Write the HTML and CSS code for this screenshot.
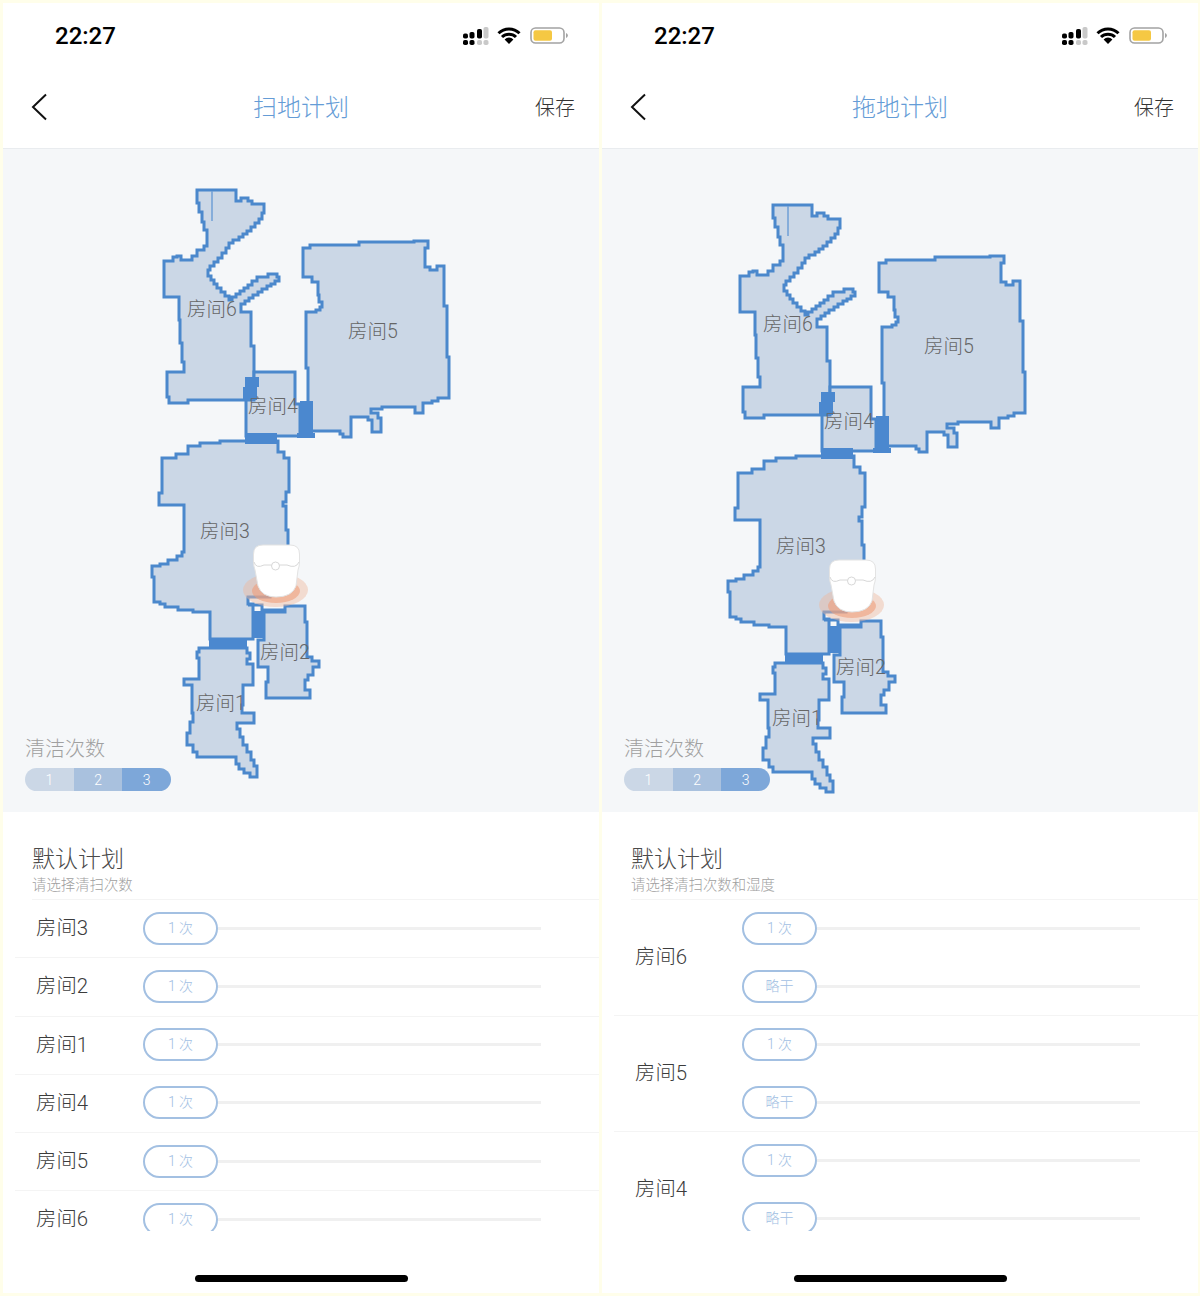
FILE: index.html
```html
<!DOCTYPE html>
<html lang="zh-CN">
<head>
  <meta charset="UTF-8">
  <meta name="viewport" content="width=device-width, initial-scale=1.0">
  <title>清扫计划</title>
  <link rel="stylesheet" href="styles.css">
</head>
<body>
  <!-- shared drawings: status icons, floor plan, robot -->
  <svg class="defs" width="0" height="0" aria-hidden="true">
    <defs>
      <symbol id="signal" viewBox="0 0 26 18">
        <rect x="0" y="6.600" width="5" height="5" rx="1.800" fill="#000"/>
        <rect x="0" y="13" width="5" height="5" rx="1.800" fill="#000"/>
        <rect x="6.500" y="5" width="5" height="6.600" rx="1.800" fill="#000"/>
        <rect x="6.500" y="13" width="5" height="5" rx="1.800" fill="#000"/>
        <rect x="14" y="2" width="5" height="9.600" rx="1.800" fill="#000"/>
        <rect x="14" y="13" width="5" height="5" rx="1.800" fill="#c9c9c9"/>
        <rect x="20.500" y="0" width="5" height="11.600" rx="1.800" fill="#c9c9c9"/>
        <rect x="20.500" y="13" width="5" height="5" rx="1.800" fill="#c9c9c9"/>
      </symbol>
      <symbol id="wifi" viewBox="0 0 24 17">
        <path d="M1.500 6.200a15 15 0 0 1 21 0M5 10a10 10 0 0 1 14 0" fill="none" stroke="#000" stroke-width="3"/>
        <path d="M12 17l-4.400-4.600a6.200 6.200 0 0 1 8.800 0z" fill="#000"/>
      </symbol>
      <symbol id="battery" viewBox="0 0 38 17">
        <rect x="1" y="1" width="33" height="15" rx="4.500" fill="none" stroke="#a3a3a3" stroke-width="1.600"/>
        <rect x="3.500" y="3.200" width="18.500" height="10.600" rx="2" fill="#f5c843"/>
        <path d="M36 6v5a2.600 2.600 0 0 0 0-5z" fill="#a3a3a3"/>
      </symbol>
      <g id="plan">
        <path class="room" d="M197 190H236V201H241V198H248V201H252V204H264V213H262V219H259V223H255V227H251V231H247V234H243V237H239V240H233V243H229V248H226V253H222V258H218V262H214V266H210V270H208V276H211V280H214V284H217V288H221V292H225V296H229V300H232V297H236V294H240V291H244V288H248V285H252V281H257V277H268V274H277V277H279V281H275V284H271V286H267V289H262V292H258V295H253V298H249V301H245V304H241V312H251V346H254V400H188V403H169V397H167V372H184V362H182V343H180V320H179V297H164V261H173V257H177V256H181V260H192V256H197V250H204V246H207V230H204V222H202V212H199V203H197Z"/>
        <path class="edge" d="M212 191V221"/>
        <path class="room" d="M303 248H310V245H359V242H414V241H428V248H425V267H430V270H437V266H444V306H447V357H449V398H438V401H432V403H423V413H415V407H382V409H371V413H378V418H381V432H372V420H368V417H351V437H343V434H340V431H308V368H306V312H316V310H320V307H322V302H319V295H318V282H312V277H303Z"/>
        <path class="room" d="M254 372H295V404H300V436H246V400H254Z"/>
        <path class="room" d="M278 441V452H284V458H289V492H286V502H283V506H286V530H288V548H270V597H248V604H253V639H210V612H193V610H178V607H165V604H160V602H154V577H152V566H160V564H168V560H177V556H182V552H184V525H184V505H159V493H162V458H176V454H188V446H200V443H220V441Z"/>
        <path class="room" d="M264 612H285V606H305V622H307V657H312V661H319V667H313V675H308V680H305V690H310V698H266V682H268V667H258V640H264Z"/>
        <path class="edge thick" d="M248 605H262V610H285"/>
        <path class="room" d="M199 648H247V653H250V659H247V664H253V685H243V705H242V713H254V723H237V729H240V737H243V745H247V752H251V760H254V766H257V777H250V773H244V769H239V764H236V757H197V752H193V745H187V733H190V722H193V713H192V685H184V679H199V658H197V652H199Z"/>
        <path class="door" d="M245 377H259V387H257V400H243V387H245Z"/>
        <path class="door" d="M300 401H313V433H315V438H297V433H300Z"/>
        <rect class="door" x="245" y="433" width="32" height="11"/>
        <rect class="door" x="209" y="638" width="38" height="11"/>
        <rect class="door" x="253" y="611" width="11" height="27"/>
      </g>
      <g id="robot">
        <ellipse cx="275.500" cy="590" rx="32.500" ry="17" fill="#f0b79e" fill-opacity=".45"/>
        <ellipse cx="276" cy="591" rx="24" ry="12" fill="#ee9f7c" fill-opacity=".6"/>
        <path d="M253.500 562V554Q253.500 545 263 545H290Q299.500 545 299.500 554V562Q299.500 566 298 570L296 586Q292 597 276 597Q262 597 258 586L255 570Q253.500 566 253.500 562Z" fill="#fff" stroke="#e3e3e3" stroke-width="1"/>
        <path d="M254 562Q256 569 264 565H287Q296 569 299 562" fill="none" stroke="#d8d8d8" stroke-width="1"/>
        <circle cx="275.500" cy="566" r="4" fill="#fff" stroke="#d8d8d8"/>
      </g>
    </defs>
  </svg>

  <section class="phone">
    <div class="screen">
      <div class="status">
        <span class="time">22:27</span>
        <div class="status-icons">
          <svg class="ic-signal"><use href="#signal"/></svg>
          <svg class="ic-wifi"><use href="#wifi"/></svg>
          <svg class="ic-battery"><use href="#battery"/></svg>
        </div>
      </div>
      <div class="nav">
        <svg class="back" viewBox="0 0 16 28"><path d="M15 1.500L2 14l13 12.500"/></svg>
        <div class="nav-title">扫地计划</div>
        <div class="nav-save">保存</div>
      </div>
      <div class="map">
        <svg class="map-canvas" viewBox="3 149 596 663">
          <use href="#plan"/>
          <text class="label" x="212" y="316">房间6</text>
          <text class="label" x="373" y="338">房间5</text>
          <text class="label" x="273" y="413">房间4</text>
          <text class="label" x="225" y="538">房间3</text>
          <text class="label" x="285" y="659">房间2</text>
          <text class="label" x="221" y="710">房间1</text>
          <use href="#robot"/>
        </svg>
        <div class="legend">
          <div class="legend-title">清洁次数</div>
          <div class="legend-pill">
            <span class="seg seg-1">1</span><span class="seg seg-2">2</span><span class="seg seg-3">3</span>
          </div>
        </div>
      </div>
      <div class="sheet">
        <div class="sheet-head">
          <div class="sheet-title">默认计划</div>
          <div class="sheet-sub">请选择清扫次数</div>
        </div>
        <div class="plan-list">
          <div class="plan-row first">
            <div class="room-name">房间3</div>
            <div class="sliders"><div class="slider"><span class="chip">1 次</span><i class="track"></i></div></div>
          </div>
          <div class="plan-row">
            <div class="room-name">房间2</div>
            <div class="sliders"><div class="slider"><span class="chip">1 次</span><i class="track"></i></div></div>
          </div>
          <div class="plan-row">
            <div class="room-name">房间1</div>
            <div class="sliders"><div class="slider"><span class="chip">1 次</span><i class="track"></i></div></div>
          </div>
          <div class="plan-row">
            <div class="room-name">房间4</div>
            <div class="sliders"><div class="slider"><span class="chip">1 次</span><i class="track"></i></div></div>
          </div>
          <div class="plan-row">
            <div class="room-name">房间5</div>
            <div class="sliders"><div class="slider"><span class="chip">1 次</span><i class="track"></i></div></div>
          </div>
          <div class="plan-row">
            <div class="room-name">房间6</div>
            <div class="sliders"><div class="slider"><span class="chip">1 次</span><i class="track"></i></div></div>
          </div>
        </div>
        <div class="home-bar"></div>
      </div>
    </div>
  </section>

  <section class="phone">
    <div class="screen">
      <div class="status">
        <span class="time">22:27</span>
        <div class="status-icons">
          <svg class="ic-signal"><use href="#signal"/></svg>
          <svg class="ic-wifi"><use href="#wifi"/></svg>
          <svg class="ic-battery"><use href="#battery"/></svg>
        </div>
      </div>
      <div class="nav">
        <svg class="back" viewBox="0 0 16 28"><path d="M15 1.500L2 14l13 12.500"/></svg>
        <div class="nav-title">拖地计划</div>
        <div class="nav-save">保存</div>
      </div>
      <div class="map">
        <svg class="map-canvas" viewBox="3 149 596 663">
          <g transform="translate(-23 15)">
            <use href="#plan"/>
            <text class="label" x="212" y="316">房间6</text>
            <text class="label" x="373" y="338">房间5</text>
            <text class="label" x="273" y="413">房间4</text>
            <text class="label" x="225" y="538">房间3</text>
            <text class="label" x="285" y="659">房间2</text>
            <text class="label" x="221" y="710">房间1</text>
            <use href="#robot"/>
          </g>
        </svg>
        <div class="legend">
          <div class="legend-title">清洁次数</div>
          <div class="legend-pill">
            <span class="seg seg-1">1</span><span class="seg seg-2">2</span><span class="seg seg-3">3</span>
          </div>
        </div>
      </div>
      <div class="sheet">
        <div class="sheet-head">
          <div class="sheet-title">默认计划</div>
          <div class="sheet-sub">请选择清扫次数和湿度</div>
        </div>
        <div class="plan-list">
          <div class="plan-row first double">
            <div class="room-name">房间6</div>
            <div class="sliders">
              <div class="slider"><span class="chip">1 次</span><i class="track"></i></div>
              <div class="slider"><span class="chip">略干</span><i class="track"></i></div>
            </div>
          </div>
          <div class="plan-row double">
            <div class="room-name">房间5</div>
            <div class="sliders">
              <div class="slider"><span class="chip">1 次</span><i class="track"></i></div>
              <div class="slider"><span class="chip">略干</span><i class="track"></i></div>
            </div>
          </div>
          <div class="plan-row double">
            <div class="room-name">房间4</div>
            <div class="sliders">
              <div class="slider"><span class="chip">1 次</span><i class="track"></i></div>
              <div class="slider"><span class="chip">略干</span><i class="track"></i></div>
            </div>
          </div>
        </div>
        <div class="home-bar"></div>
      </div>
    </div>
  </section>
</body>
</html>
```

FILE: styles.css
```css
* { box-sizing: border-box; }

body {
  margin: 0;
  width: 1200px;
  height: 1296px;
  display: flex;
  overflow: hidden;
  background: #fffeea;
  font-family: Roboto, "Noto Sans CJK SC", "Noto Sans", sans-serif;
  font-weight: 300;
  color: #555;
}

.defs { position: absolute; }

.phone {
  width: 599px;
  height: 1296px;
  padding: 3px 0 3px 3px;
}

.screen {
  height: 100%;
  display: flex;
  flex-direction: column;
  background: #fff;
}

/* status bar */
.status {
  height: 65px;
  flex: none;
  display: flex;
  align-items: center;
  justify-content: space-between;
  padding: 0 31px 0 52px;
}

.time {
  font-family: Roboto, "Liberation Sans", sans-serif;
  font-size: 24px;
  font-weight: 500;
  color: #000;
}

.status-icons {
  display: flex;
  align-items: center;
  margin-top: 1px;
}

.ic-signal { width: 26px; height: 18px; }
.ic-wifi { width: 24px; height: 17px; margin-left: 8px; margin-top: -2px; }
.ic-battery { width: 38px; height: 17px; margin-left: 9px; margin-top: -2px; }

/* nav */
.nav {
  height: 81px;
  flex: none;
  display: grid;
  grid-template-columns: 1fr auto 1fr;
  align-items: center;
  padding: 0 24px;
  border-bottom: 1px solid #e9ecef;
}

.back {
  width: 16px;
  height: 28px;
  margin: 0 0 2px 4px;
}

.back path {
  fill: none;
  stroke: #111;
  stroke-width: 2;
}

.nav-title {
  font-size: 24px;
  line-height: 32px;
  color: #659cd6;
}

.nav-save {
  justify-self: end;
  font-size: 20px;
  color: #333;
  margin-bottom: 3px;
}

/* map */
.map {
  position: relative;
  height: 663px;
  flex: none;
  display: flex;
  flex-direction: column;
  justify-content: flex-end;
  padding: 0 0 21px 22px;
  background: #f5f7f9;
}

.map-canvas {
  position: absolute;
  top: 0;
  left: 0;
  width: 596px;
  height: 663px;
}

.room {
  fill: #cbd7e6;
  stroke: #4b88cc;
  stroke-width: 3;
}

.edge {
  fill: none;
  stroke: #6f9fd6;
  stroke-width: 1.500;
}

.edge.thick {
  stroke: #4b88cc;
  stroke-width: 3;
}

.door { fill: #4b88cf; }

.label {
  font-size: 19.500px;
  fill: #666;
  text-anchor: middle;
}

.legend { position: relative; }

.legend-title {
  font-size: 20px;
  line-height: 28px;
  color: #a0a0a0;
  margin-bottom: 5px;
}

.legend-pill {
  width: 146px;
  height: 23px;
  display: flex;
  border-radius: 12px;
  overflow: hidden;
}

.seg {
  flex: 1;
  text-align: center;
  font-size: 14px;
  line-height: 25px;
  color: #fff;
}

.seg-1 { background: #cbd7e6; }
.seg-2 { background: #a9c1de; }
.seg-3 { background: #7da7d9; }

/* bottom sheet */
.sheet {
  flex: 1;
  display: flex;
  flex-direction: column;
  min-height: 0;
}

.sheet-head {
  height: 87px;
  flex: none;
  padding: 33px 0 0 29px;
}

.sheet-title {
  font-size: 23px;
  line-height: 29px;
  color: #4a4a4a;
}

.sheet-sub {
  font-size: 14.400px;
  line-height: 21px;
  margin-top: 1px;
  color: #a0a0a0;
}

.plan-list {
  height: 332px;
  flex: none;
  overflow: hidden;
}

.plan-row {
  height: 58.250px;
  display: flex;
  align-items: center;
  margin-left: 12px;
  box-shadow: inset 0 1px 0 #f4f4f4;
}

.plan-row.double { height: 116px; }

.plan-row.first {
  margin-left: 0;
  padding-left: 12px;
  box-shadow: none;
  position: relative;
}

.plan-row.first::before {
  content: "";
  position: absolute;
  top: 0;
  left: 29px;
  right: 0;
  height: 1px;
  background: #f4f4f4;
}

.room-name {
  width: 128px;
  padding-left: 21px;
  font-size: 20.400px;
  line-height: 24px;
  color: #3c3c3c;
}

.slider {
  height: 58px;
  display: flex;
  align-items: center;
}

.chip {
  width: 75px;
  height: 33px;
  flex: none;
  border: 2px solid #a3c0e2;
  border-radius: 17px;
  text-align: center;
  font-size: 14px;
  line-height: 29px;
  color: #a2c0e3;
}

.track {
  width: 323px;
  height: 3px;
  background: #f0f0f0;
}

.home-bar {
  width: 213px;
  height: 7px;
  flex: none;
  margin: 44px auto 0;
  border-radius: 4px;
  background: #000;
}
```
